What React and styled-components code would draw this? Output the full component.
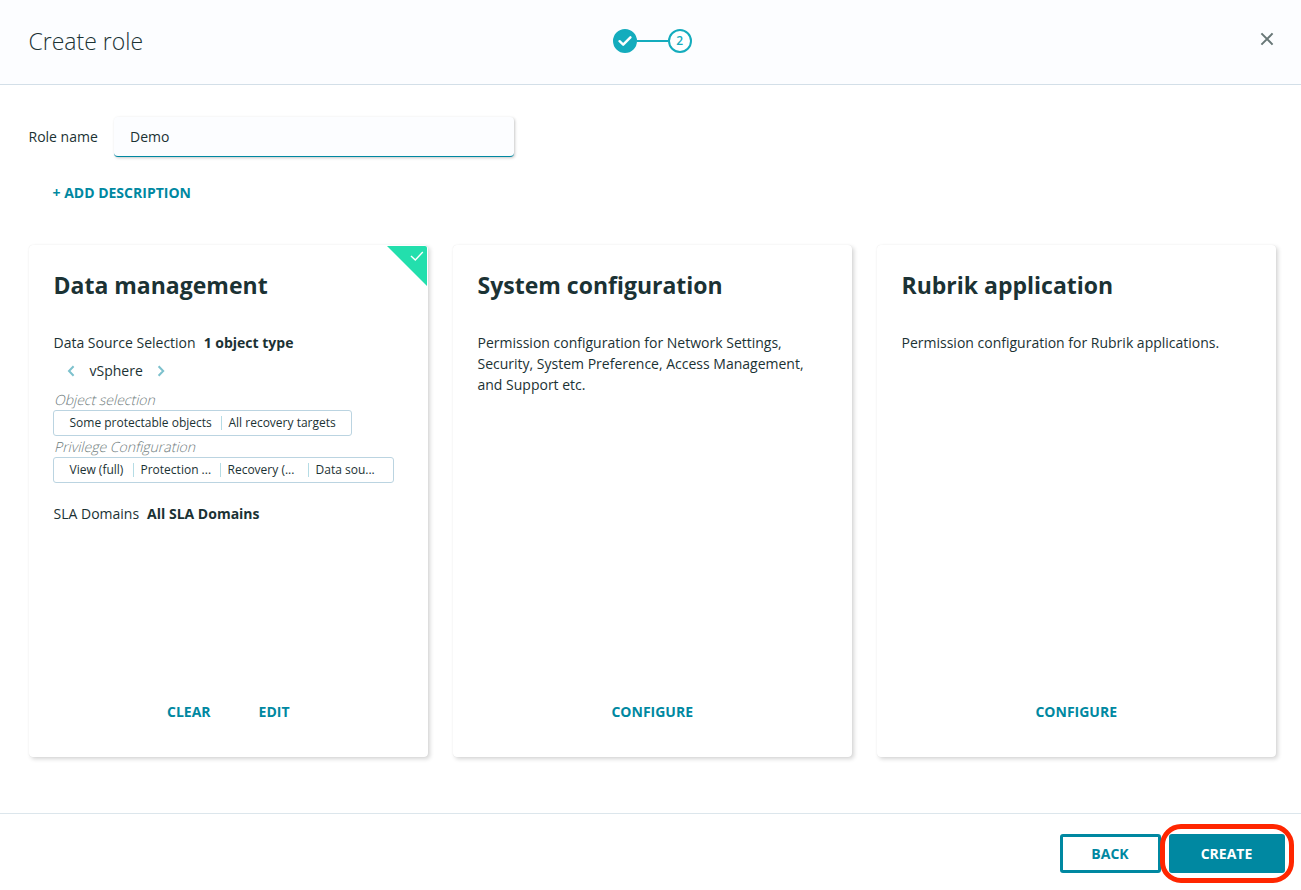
import React from "react";
import styled, { createGlobalStyle } from "styled-components";

const teal = "#0088a1";

const GlobalStyle = createGlobalStyle`
  *, *::before, *::after { box-sizing: border-box; }
  body {
    margin: 0;
    background: #fff;
    color: #1b3234;
    font: 400 14px/21px "Open Sans", "Noto Sans", sans-serif;
    overflow: hidden;
  }
  button, input { font: inherit; color: inherit; }
  h1, h2, p { margin: 0; }
`;

const Page = styled.div`
  height: 890px;
  display: flex;
  flex-direction: column;
`;

const Header = styled.header`
  height: 85px;
  flex: none;
  display: grid;
  grid-template-columns: 1fr auto 1fr;
  align-items: center;
  padding: 0 27px 3px 28.5px;
  background: #fcfdff;
  border-bottom: 1px solid #d3dfe8;
`;

const Title = styled.h1`
  font-size: 23px;
  line-height: 32px;
  font-weight: 300;
`;

const Stepper = styled.div`
  display: flex;
  align-items: center;
  padding-left: 2px;
`;

const Step = styled.span`
  width: 24px;
  height: 24px;
  display: flex;
  align-items: center;
  justify-content: center;
  border: 2px solid #14acbd;
  border-radius: 50%;
  background: ${(p) => (p.$done ? "#14acbd" : "#fff")};
  color: #14acbd;
  font-size: 12px;
  line-height: 16px;
  font-weight: 600;
`;

const StepLine = styled.span`
  width: 31px;
  height: 2px;
  background: #14acbd;
`;

const CloseButton = styled.button`
  justify-self: end;
  display: flex;
  padding: 0;
  margin-bottom: 4px;
  border: 0;
  background: none;
`;

const Main = styled.main`
  flex: 1;
  padding: 32px 25px 0 29px;
`;

const Field = styled.label`
  display: flex;
  align-items: center;
  gap: 16px;
`;

const FieldLabel = styled.span`
  width: 69px;
  margin-bottom: 2px;
  text-indent: -0.5px;
  white-space: nowrap;
`;

const Input = styled.input`
  width: 400px;
  height: 40px;
  padding: 0 16px;
  border: 0;
  border-bottom: 1px solid ${teal};
  border-radius: 4px;
  outline: 0;
  background: #fcfdff;
  box-shadow: 1px 1px 3px rgba(0, 0, 0, 0.22);
`;

const LinkButton = styled.button`
  padding: 0;
  border: 0;
  background: none;
  color: ${teal};
  font-weight: 700;
  line-height: 21px;
`;

const Description = styled.div`
  display: flex;
  margin: 25px 0 42px 23.5px;
`;

const Cards = styled.div`
  display: grid;
  grid-template-columns: repeat(3, 399px);
  gap: 25px;
`;

const Card = styled.section`
  position: relative;
  height: 512px;
  display: flex;
  flex-direction: column;
  padding: 24px 25px 35px 24.5px;
  border-radius: 4px;
  background: #fff;
  box-shadow: 0 0 1px rgba(0, 0, 0, 0.1), 2px 2px 4px rgba(0, 0, 0, 0.17);
`;

const CardTitle = styled.h2`
  font-size: 23px;
  line-height: 32px;
  font-weight: 700;
  margin-bottom: 31px;
`;

const CardActions = styled.div`
  display: flex;
  justify-content: center;
  gap: 48px;
  margin-top: auto;
`;

const SelectedCorner = styled.svg`
  position: absolute;
  top: 1px;
  right: 1px;
`;

const Summary = styled.p`
  display: flex;
  gap: 8px;
`;

const SourcePager = styled.div`
  display: flex;
  align-items: center;
  gap: 14px;
  margin: 7px 0 8px 13px;
`;

const Arrow = styled.svg`
  display: block;
`;

const GroupLabel = styled.p`
  align-self: flex-start;
  font-weight: 300;
  color: #6f7c7d;
  transform: skewX(-14deg);
  transform-origin: 0 75%;
`;

const TagBox = styled.div`
  display: flex;
  align-items: center;
  width: ${(p) => p.$width}px;
  height: 26px;
  margin-left: -0.5px;
  padding-left: 7.5px;
  border: 1px solid #bbd4e1;
  border-radius: 3px;
`;

const Tag = styled.span`
  width: ${(p) => p.$width}px;
  padding-left: 7px;
  font-size: 12px;
  line-height: 14px;
  white-space: nowrap;
  border-left: 1px solid ${(p) => (p.$divided ? "#b5dce5" : "transparent")};
`;

const Domains = styled(Summary)`
  margin-top: 20px;
`;

const Footer = styled.footer`
  height: 77px;
  flex: none;
  display: flex;
  align-items: flex-start;
  justify-content: flex-end;
  gap: 8px;
  padding: 20px 16px 0;
  border-top: 1px solid #dce6ec;
`;

const Button = styled.button`
  width: ${(p) => (p.$primary ? 116 : 101)}px;
  height: 39px;
  padding: 0 1px 0 0;
  border: 3px solid ${teal};
  border-radius: 3px;
  background: ${(p) => (p.$primary ? teal : "#fff")};
  color: ${(p) => (p.$primary ? "#fff" : teal)};
  font-weight: 700;
`;

const Highlight = styled.div`
  position: relative;
  display: flex;
  &::after {
    content: "";
    position: absolute;
    inset: -10px -9px;
    border: 5px solid #ff2600;
    border-radius: 21px;
    pointer-events: none;
  }
`;

const objectTags = [
  { text: "Some protectable objects", width: 159 },
  { text: "All recovery targets", width: 120 },
];

const privilegeTags = [
  { text: "View (full)", width: 71 },
  { text: "Protection ...", width: 87 },
  { text: "Recovery (...", width: 88 },
  { text: "Data sou...", width: 80 },
];

function Tags({ items, width }) {
  return (
    <TagBox $width={width}>
      {items.map((item, i) => (
        <Tag key={item.text} $width={item.width} $divided={i > 0}>
          {item.text}
        </Tag>
      ))}
    </TagBox>
  );
}

function Chevron({ d }) {
  return (
    <Arrow width="9" height="12" viewBox="0 0 9 12" fill="none" stroke="#7dc1cd" strokeWidth="2">
      <path d={d} />
    </Arrow>
  );
}

export default function App() {
  return (
    <>
      <GlobalStyle />
      <Page>
        <Header>
          <Title>Create role</Title>
          <Stepper>
            <Step $done>
              <svg width="14" height="12" viewBox="0 0 14 12" fill="none" stroke="#fff" strokeWidth="2.4">
                <path d="M1.6 6.2 5.2 9.7 12.4 2.3" strokeLinejoin="round" strokeLinecap="round" />
              </svg>
            </Step>
            <StepLine />
            <Step>2</Step>
          </Stepper>
          <CloseButton aria-label="Close">
            <svg width="14" height="14" viewBox="0 0 14 14" fill="none" stroke="#687777" strokeWidth="2">
              <path d="M1.4 1.4 12.6 12.6M12.6 1.4 1.4 12.6" />
            </svg>
          </CloseButton>
        </Header>
        <Main>
          <Field>
            <FieldLabel>Role name</FieldLabel>
            <Input defaultValue="Demo" />
          </Field>
          <Description>
            <LinkButton>+ ADD DESCRIPTION</LinkButton>
          </Description>
          <Cards>
            <Card>
              <SelectedCorner width="40" height="40" viewBox="0 0 40 40">
                <path d="M0 0H38Q40 0 40 2V40Z" fill="#23dfad" />
                <path d="M24 10 28.3 14 35.8 6" fill="none" stroke="#fff" strokeWidth="1.4" />
              </SelectedCorner>
              <CardTitle>Data management</CardTitle>
              <Summary>
                Data Source Selection <b>1 object type</b>
              </Summary>
              <SourcePager>
                <Chevron d="M6.6 1.2 2 6 6.6 10.8" />
                <span>vSphere</span>
                <Chevron d="M1.6 1.2 6.2 6 1.6 10.8" />
              </SourcePager>
              <GroupLabel>Object selection</GroupLabel>
              <Tags items={objectTags} width={299} />
              <GroupLabel>Privilege Configuration</GroupLabel>
              <Tags items={privilegeTags} width={341} />
              <Domains>
                SLA Domains <b>All SLA Domains</b>
              </Domains>
              <CardActions>
                <LinkButton>CLEAR</LinkButton>
                <LinkButton>EDIT</LinkButton>
              </CardActions>
            </Card>
            <Card>
              <CardTitle>System configuration</CardTitle>
              <p>
                Permission configuration for Network Settings, Security, System Preference, Access
                Management, and Support etc.
              </p>
              <CardActions>
                <LinkButton>CONFIGURE</LinkButton>
              </CardActions>
            </Card>
            <Card>
              <CardTitle>Rubrik application</CardTitle>
              <p>Permission configuration for Rubrik applications.</p>
              <CardActions>
                <LinkButton>CONFIGURE</LinkButton>
              </CardActions>
            </Card>
          </Cards>
        </Main>
        <Footer>
          <Button>BACK</Button>
          <Highlight>
            <Button $primary>CREATE</Button>
          </Highlight>
        </Footer>
      </Page>
    </>
  );
}
